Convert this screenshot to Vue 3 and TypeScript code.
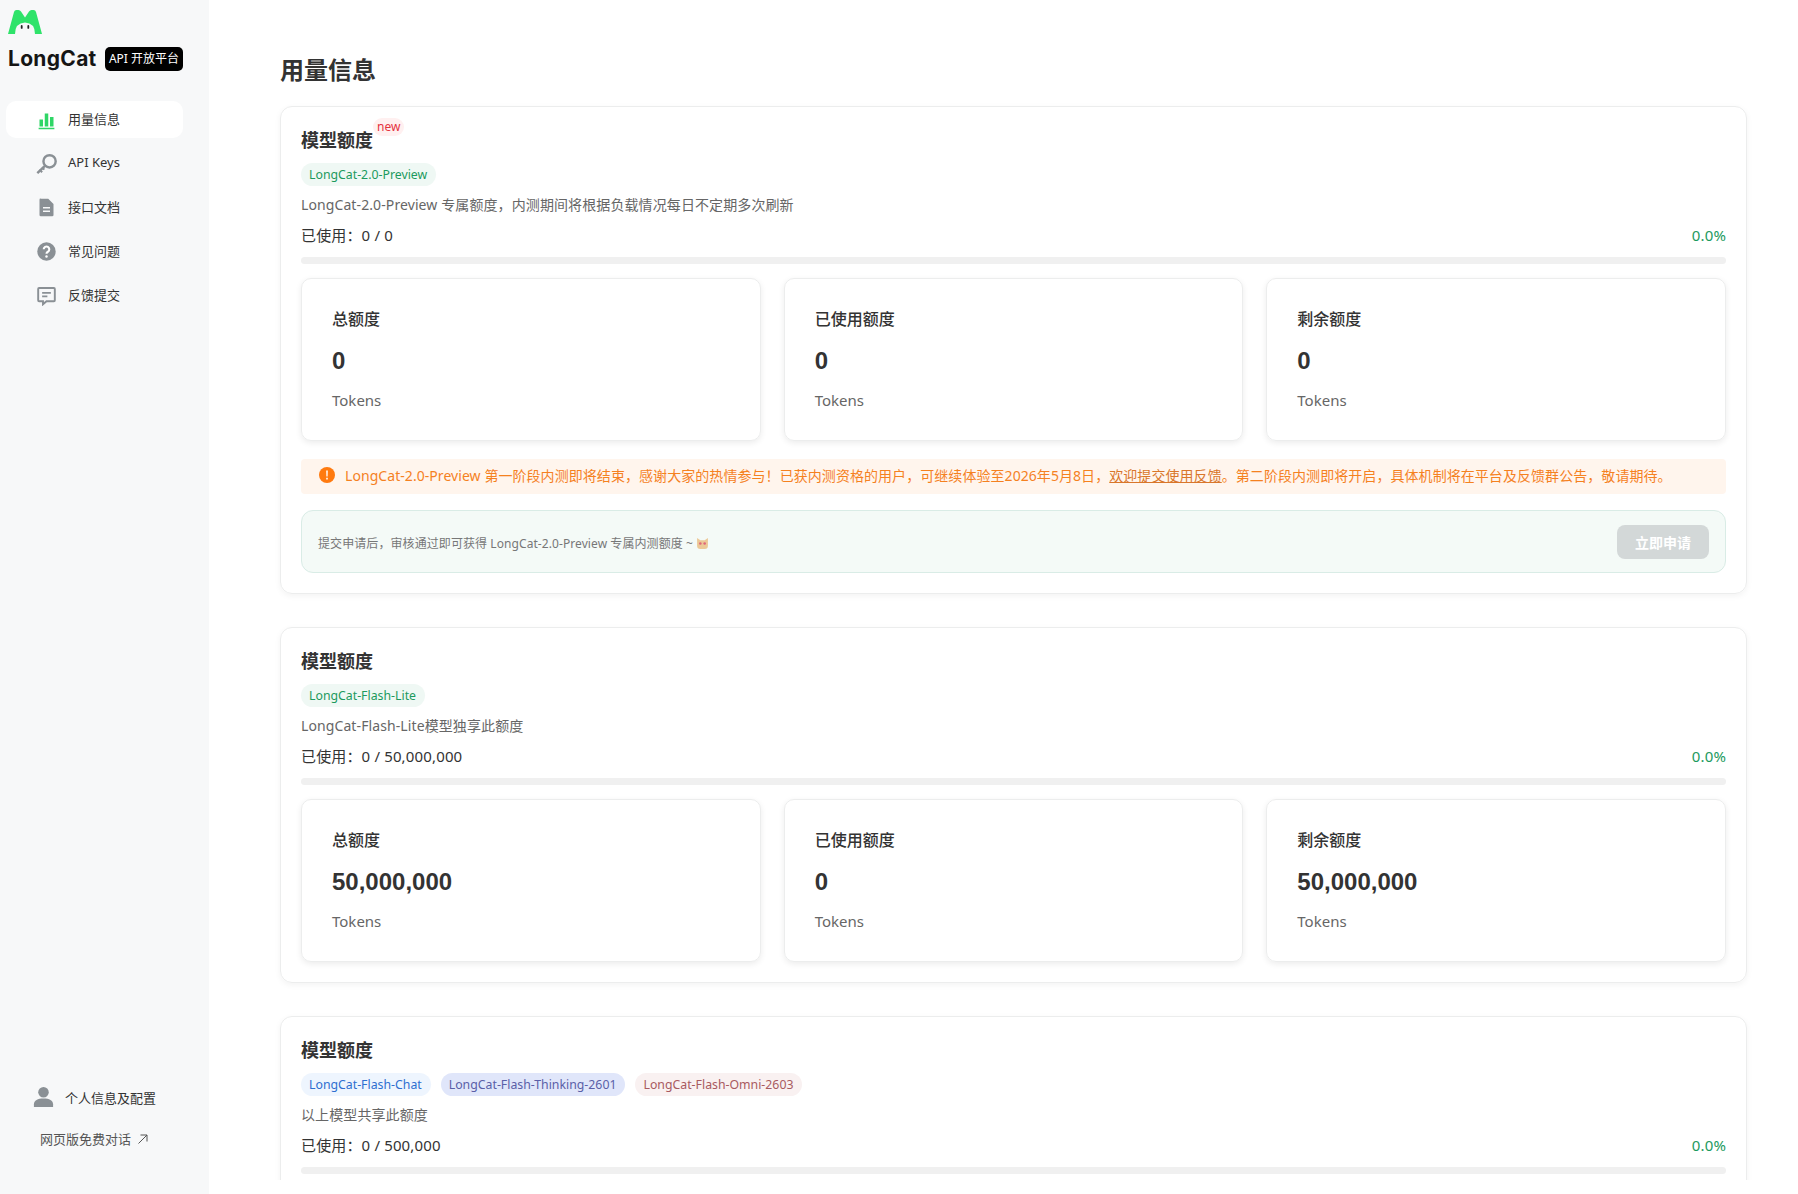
<script setup lang="ts">
type Tag = { label: string; tone: 'green' | 'blue' | 'violet' | 'rose' }
type Quota = {
  badge?: boolean
  tags: Tag[]
  desc: string
  used: string
  stats: [string, string, string]
  notice?: boolean
}

const navItems = [
  { label: '用量信息', icon: 'chart', active: true },
  { label: 'API Keys', icon: 'key' },
  { label: '接口文档', icon: 'doc' },
  { label: '常见问题', icon: 'help' },
  { label: '反馈提交', icon: 'chat' },
]

const statLabels = ['总额度', '已使用额度', '剩余额度']

const quotas: Quota[] = [
  {
    badge: true,
    tags: [{ label: 'LongCat-2.0-Preview', tone: 'green' }],
    desc: 'LongCat-2.0-Preview 专属额度，内测期间将根据负载情况每日不定期多次刷新',
    used: '0 / 0',
    stats: ['0', '0', '0'],
    notice: true,
  },
  {
    tags: [{ label: 'LongCat-Flash-Lite', tone: 'green' }],
    desc: 'LongCat-Flash-Lite模型独享此额度',
    used: '0 / 50,000,000',
    stats: ['50,000,000', '0', '50,000,000'],
  },
  {
    tags: [
      { label: 'LongCat-Flash-Chat', tone: 'blue' },
      { label: 'LongCat-Flash-Thinking-2601', tone: 'violet' },
      { label: 'LongCat-Flash-Omni-2603', tone: 'rose' },
    ],
    desc: '以上模型共享此额度',
    used: '0 / 500,000',
    stats: ['500,000', '0', '500,000'],
  },
]
</script>

<template>
  <div class="page">
    <aside class="side">
      <div class="brand">
        <svg class="brand__logo" viewBox="0 0 34 24" aria-hidden="true">
          <path
            fill="#2fe36a"
            d="M0 24 6 2Q6.500 0 8.500 0H10.500Q12 0 13 1.500L17 7.500 21 1.500Q22 0 23.500 0H25.500Q27.500 0 28 2L34 24H27Q27 13 17 12.500 7 13 7 24Z"
          />
          <rect x="12.800" y="15" width="1.800" height="3.800" rx=".9" fill="#222" />
          <rect x="19.400" y="15" width="1.800" height="3.800" rx=".9" fill="#222" />
        </svg>
        <div class="brand__row">
          <span class="brand__name">LongCat</span>
          <span class="brand__badge">API 开放平台</span>
        </div>
      </div>

      <nav class="nav">
        <a
          v-for="item in navItems"
          :key="item.label"
          class="nav__item"
          :class="{ 'nav__item--active': item.active }"
        >
          <svg class="nav__icon" viewBox="0 0 24 24" aria-hidden="true">
            <template v-if="item.icon === 'chart'">
              <path fill="#2fd666" d="M4 12h4v8H4zM10 5h4v15h-4zM16 9h4v11h-4zM3 21.500h18V23H3z" />
            </template>
            <template v-else-if="item.icon === 'key'">
              <path
                fill="none"
                stroke="#8a9095"
                stroke-width="2.800"
                d="M15.500 2.500a7 7 0 1 1 0 14 7 7 0 0 1 0-14ZM10.500 14.500 1.500 23"
              />
              <path fill="none" stroke="#8a9095" stroke-width="2.400" d="M4 19l3 3M7 16.500l2.500 2.500" />
            </template>
            <template v-else-if="item.icon === 'doc'">
              <path
                fill="#8a9095"
                fill-rule="evenodd"
                d="M6 2h8l6 6v12.500A1.500 1.500 0 0 1 18.500 22h-13A1.500 1.500 0 0 1 4 20.500v-17A1.500 1.500 0 0 1 6 2ZM8 11.500V13h8v-1.500ZM8 15.500V17h8v-1.500Z"
              />
            </template>
            <template v-else-if="item.icon === 'help'">
              <circle cx="12" cy="12" r="10.500" fill="#8a9095" />
              <path
                fill="none"
                stroke="#fff"
                stroke-width="2.400"
                d="M8.800 9.500a3.200 3.200 0 1 1 4.800 2.800c-1 .6-1.600 1.200-1.600 2.400"
              />
              <circle cx="12" cy="17.800" r="1.400" fill="#fff" />
            </template>
            <template v-else>
              <path
                fill="none"
                stroke="#8a9095"
                stroke-width="2.200"
                d="M3.500 3.500h17a1 1 0 0 1 1 1v13a1 1 0 0 1-1 1H12l-4 3.500v-3.500H3.500a1 1 0 0 1-1-1v-13a1 1 0 0 1 1-1Z"
              />
              <path fill="none" stroke="#8a9095" stroke-width="1.800" d="M7 9h10M7 13h6" />
            </template>
          </svg>
          <span class="nav__label">{{ item.label }}</span>
        </a>
      </nav>

      <div class="side__foot">
        <div class="profile">
          <svg class="profile__icon" viewBox="0 0 24 24" aria-hidden="true">
            <circle cx="12" cy="6.500" r="5.500" fill="#8a9095" />
            <path fill="#8a9095" d="M2 22v-3c0-4 4-6 10-6s10 2 10 6v3Z" />
          </svg>
          <span>个人信息及配置</span>
        </div>
        <a class="chat-link">
          网页版免费对话
          <svg viewBox="0 0 12 12" class="chat-link__arrow" aria-hidden="true">
            <path fill="none" stroke="#555" stroke-width="1" d="M1.500 10.500 10 2M3.500 2H10v6.500" />
          </svg>
        </a>
      </div>
    </aside>

    <main class="main">
      <h1 class="main__title">用量信息</h1>

      <section v-for="(quota, index) in quotas" :key="index" class="quota">
        <h2 class="quota__title">
          模型额度
          <span v-if="quota.badge" class="quota__new">new</span>
        </h2>
        <div class="quota__tags">
          <span v-for="tag in quota.tags" :key="tag.label" class="tag" :class="`tag--${tag.tone}`">
            {{ tag.label }}
          </span>
        </div>
        <p class="quota__desc">{{ quota.desc }}</p>
        <div class="quota__usage">
          <span>已使用：{{ quota.used }}</span>
          <span class="quota__pct">0.0%</span>
        </div>
        <div class="quota__bar"></div>

        <div class="stats">
          <div v-for="(value, i) in quota.stats" :key="i" class="stat">
            <div class="stat__label">{{ statLabels[i] }}</div>
            <div class="stat__value">{{ value }}</div>
            <div class="stat__unit">Tokens</div>
          </div>
        </div>

        <template v-if="quota.notice">
          <div class="notice">
            <svg class="notice__icon" viewBox="0 0 16 16" aria-hidden="true">
              <circle cx="8" cy="8" r="8" fill="#ff7a0f" />
              <path fill="#fff" d="M7.200 3.500h1.600l-.2 6H7.400zM7.200 10.800h1.600v1.600H7.200z" />
            </svg>
            <span>
              LongCat-2.0-Preview 第一阶段内测即将结束，感谢大家的热情参与！已获内测资格的用户，可继续体验至2026年5月8日，<u>欢迎提交使用反馈</u>。第二阶段内测即将开启，具体机制将在平台及反馈群公告，敬请期待。
            </span>
          </div>
          <div class="apply">
            <span class="apply__text">
              提交申请后，审核通过即可获得 LongCat-2.0-Preview 专属内测额度 ~
              <svg class="apply__cat" viewBox="0 0 12 12" aria-hidden="true">
                <path fill="#ecc896" d="M1 1 4 3h4l3-2v7a3 3 0 0 1-3 3H4a3 3 0 0 1-3-3Z" />
                <circle cx="4" cy="6" r="1.200" fill="#e0667a" />
                <circle cx="8" cy="6" r="1.200" fill="#e0667a" />
              </svg>
            </span>
            <button class="apply__btn" type="button" disabled>立即申请</button>
          </div>
        </template>
      </section>
    </main>
  </div>
</template>

<style>
html,
body {
  margin: 0;
  height: 100%;
  background: #fff;
  overflow: hidden;
}
</style>

<style scoped>
.page {
  display: flex;
  height: 100vh;
  font-family: 'Noto Sans', 'Noto Sans CJK SC', sans-serif;
  color: #333;
}

.side {
  display: flex;
  flex-direction: column;
  flex: 0 0 209px;
  background: #f7f8f9;
}

.brand {
  padding: 10px 26px 0 8px;
}

.brand__logo {
  display: block;
  width: 34px;
  height: 24px;
}

.brand__row {
  display: flex;
  align-items: center;
  justify-content: space-between;
  margin-top: 13px;
}

.brand__name {
  font-family: Inter, sans-serif;
  font-size: 21px;
  font-weight: 700;
  line-height: 24px;
  letter-spacing: 0.3px;
  color: #151515;
}

.brand__badge {
  padding: 3px 4px;
  border-radius: 5px;
  background: #000;
  color: #fff;
  font-size: 12px;
  line-height: 18px;
}

.nav {
  display: flex;
  flex-direction: column;
  gap: 7px;
  margin: 30px 26px 0 6px;
}

.nav__item {
  display: flex;
  align-items: center;
  gap: 11px;
  height: 37px;
  padding-left: 30px;
  border-radius: 10px;
  font-size: 13px;
  color: #333;
}

.nav__item--active {
  background: #fff;
}

.nav__icon {
  width: 21px;
  height: 21px;
  flex-shrink: 0;
}

.nav__label {
  margin-top: -3px;
}

.side__foot {
  display: flex;
  flex-direction: column;
  margin-top: auto;
  padding: 0 0 46px 32px;
  font-size: 13px;
}

.profile {
  display: flex;
  align-items: center;
  gap: 10px;
}

.profile__icon {
  width: 23px;
  height: 23px;
}

.chat-link {
  display: flex;
  align-items: center;
  gap: 6px;
  margin: 20px 0 0 8px;
  color: #555;
}

.chat-link__arrow {
  width: 12px;
  height: 12px;
}

.main {
  flex: 1;
  height: 1180px;
  padding: 0 51px 0 71px;
  overflow: hidden;
}

.main__title {
  margin: 52px 0 19px;
  font-size: 24px;
  line-height: 35px;
  font-weight: 700;
  color: #333;
}

.quota {
  margin-bottom: 33px;
  padding: 20px;
  border: 1px solid #eceded;
  border-radius: 12px;
  box-shadow: 0 2px 6px rgb(0 0 0 / 5%);
}

.quota__title {
  position: relative;
  display: inline-block;
  margin: 0;
  font-size: 18px;
  line-height: 26px;
  font-weight: 700;
  color: #333;
}

.quota__new {
  position: absolute;
  top: -9px;
  left: 100%;
  padding: 0 4px;
  border-radius: 9px;
  background: #fff0f0;
  color: #e5323e;
  font-size: 12px;
  line-height: 18px;
  font-weight: 400;
}

.quota__tags {
  display: flex;
  gap: 10px;
  margin-top: 10px;
}

.tag {
  padding: 0 9px 0 8px;
  border-radius: 12px;
  font-size: 12.300px;
  line-height: 23px;
}

.tag--green {
  background: #eff8f4;
  color: #1c9a5e;
}

.tag--blue {
  background: #eef5fe;
  color: #2e6fd0;
}

.tag--violet {
  background: #e0e6fa;
  color: #5a5fa8;
}

.tag--rose {
  background: #f9f1f1;
  color: #a85a5f;
}

.quota__desc {
  margin: 8px 0 0;
  font-size: 14px;
  line-height: 22px;
  letter-spacing: 0.1px;
  color: #666;
}

.quota__usage {
  display: flex;
  justify-content: space-between;
  margin-top: 8px;
  font-size: 15px;
  line-height: 22px;
  letter-spacing: 0.15px;
}

.quota__pct {
  color: #1c9a5e;
}

.quota__bar {
  height: 7px;
  margin-top: 11px;
  border-radius: 4px;
  background: #f0f0f0;
}

.stats {
  display: grid;
  grid-template-columns: repeat(3, 1fr);
  gap: 23px;
  margin-top: 14px;
}

.stat {
  padding: 27px 30px 29px;
  border: 1px solid #eceded;
  border-radius: 10px;
  box-shadow: 0 2px 6px rgb(0 0 0 / 8%);
}

.stat__label {
  font-size: 16px;
  line-height: 26px;
  font-weight: 500;
}

.stat__value {
  margin-top: 14px;
  font-family: 'Liberation Sans', sans-serif;
  font-size: 24px;
  line-height: 30px;
  font-weight: 700;
}

.stat__unit {
  margin-top: 13px;
  font-size: 15px;
  line-height: 22px;
  color: #666;
}

.notice {
  display: flex;
  align-items: center;
  gap: 10px;
  height: 35px;
  margin-top: 18px;
  padding: 0 0 3px 18px;
  border-radius: 4px;
  background: #fff5ed;
  color: #f5811f;
  font-size: 14px;
  letter-spacing: 0.06px;
  box-sizing: border-box;
}

.notice__icon {
  width: 16px;
  height: 16px;
  flex-shrink: 0;
}

.notice u {
  color: #d9762a;
}

.apply {
  display: flex;
  align-items: center;
  justify-content: space-between;
  height: 63px;
  margin-top: 16px;
  padding: 0 16px;
  border: 1px solid #d9ece6;
  border-radius: 12px;
  background: #f4faf7;
  box-sizing: border-box;
}

.apply__text {
  margin-top: 2px;
  font-size: 12px;
  letter-spacing: 0.08px;
  color: #777;
}

.apply__cat {
  width: 13px;
  height: 13px;
  vertical-align: -2px;
}

.apply__btn {
  width: 92px;
  height: 34px;
  border: 0;
  border-radius: 8px;
  background: #d3d8d8;
  color: #fff;
  font: inherit;
  font-size: 14px;
  font-weight: 700;
}
</style>
